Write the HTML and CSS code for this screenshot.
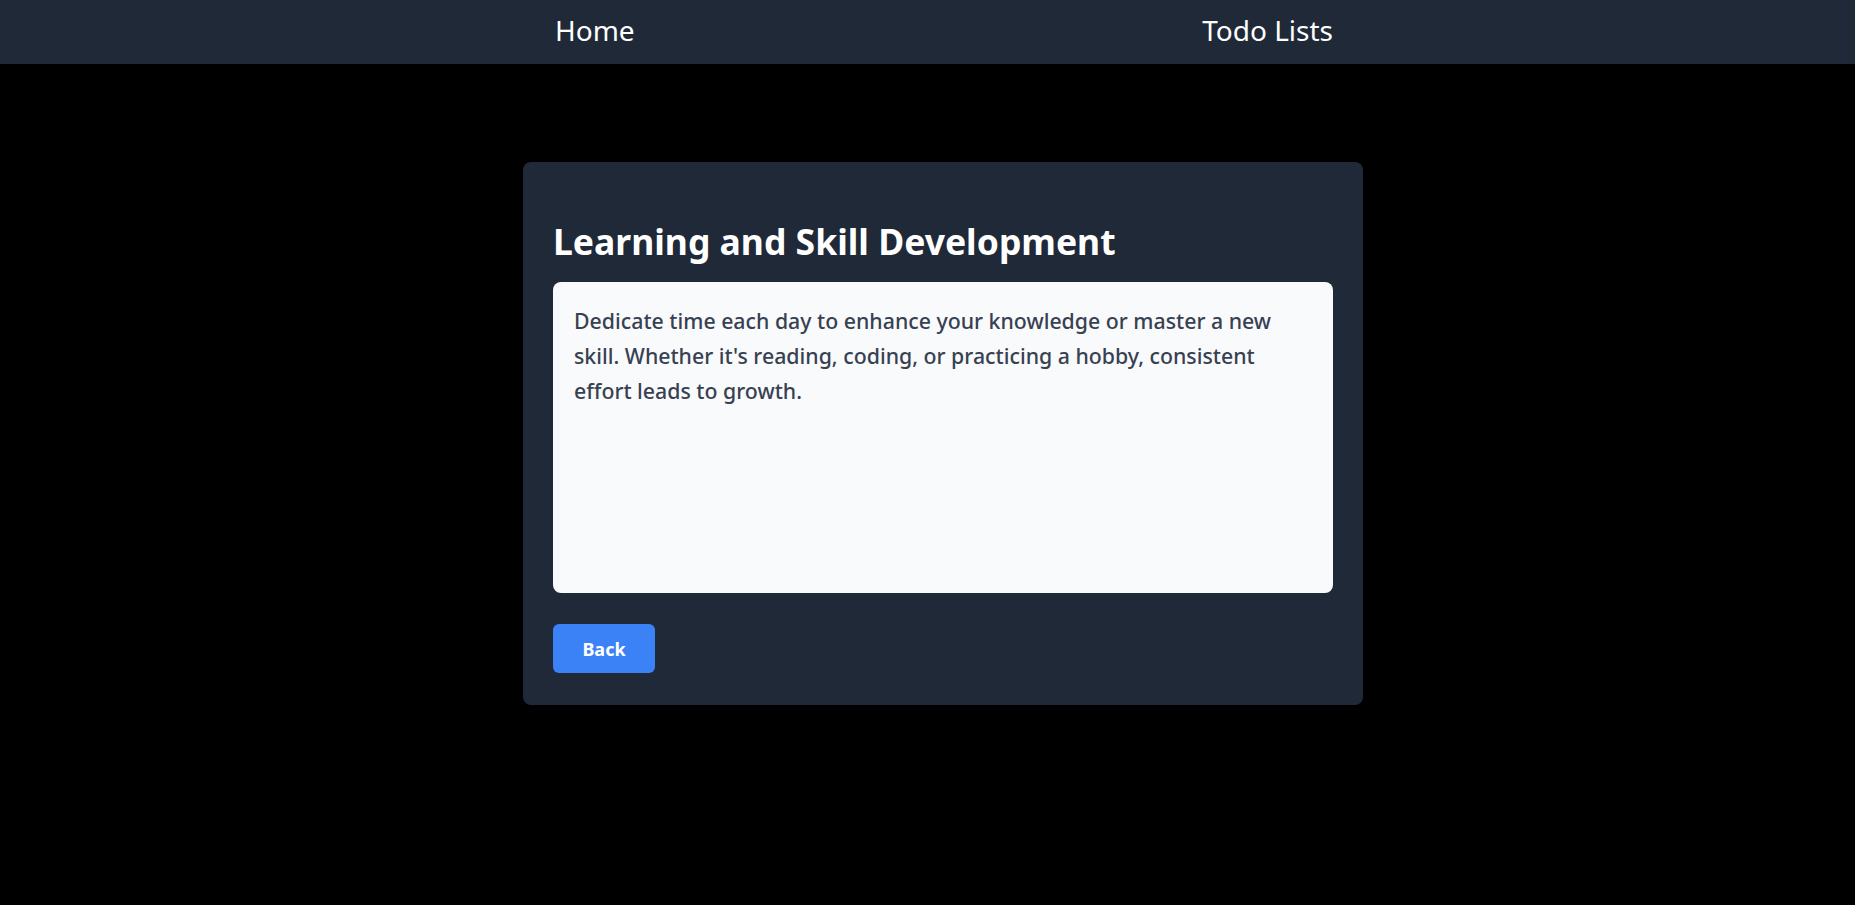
FILE: index.html
```html
<!DOCTYPE html>
<html lang="en">
<head>
<meta charset="utf-8">
<title>Learning and Skill Development</title>
<link rel="stylesheet" href="styles.css">
</head>
<body>
  <nav class="navbar">
    <div class="nav-inner">
      <a class="nav-link" href="#">Home</a>
      <a class="nav-link" href="#">Todo Lists</a>
    </div>
  </nav>
  <main class="page">
    <section class="card">
      <h1 class="card-title">Learning and Skill Development</h1>
      <div class="card-body">
        <p class="card-text">Dedicate time each day to enhance your knowledge or master a new skill. Whether it's reading, coding, or practicing a hobby, consistent effort leads to growth.</p>
      </div>
      <button class="btn-back" type="button">Back</button>
    </section>
  </main>
</body>
</html>
```

FILE: styles.css
```css
* { box-sizing: border-box; }

html, body {
  margin: 0;
  padding: 0;
  background: #000000;
  font-family: "Noto Sans", "Open Sans", sans-serif;
}

.navbar {
  background: #1f2937;
  height: 64px;
  padding-left: 31px;
}

.nav-inner {
  width: 840px;
  margin: 0 auto;
  padding: 0 30px 0 32px;
  height: 100%;
  display: flex;
  justify-content: space-between;
  align-items: center;
}

.nav-link {
  color: #ffffff;
  text-decoration: none;
  font-size: 28px;
  line-height: 36px;
  margin-top: -4px;
}

.page {
  display: flex;
  justify-content: center;
  padding-top: 98px;
  padding-left: 31px;
}

.card {
  width: 840px;
  background: #1f2937;
  border-radius: 8px;
  padding: 59px 30px 32px;
}

.card-title {
  margin: 0 0 21px;
  color: #ffffff;
  font-size: 35.5px;
  line-height: 40px;
  font-weight: 700;
}

.card-body {
  background: #f9fafb;
  border-radius: 8px;
  height: 311px;
  padding: 21px 21px;
}

.card-text {
  margin: 0;
  color: #374151;
  font-size: 21.3px;
  line-height: 35px;
  font-weight: 500;
}

.btn-back {
  margin-top: 31px;
  display: block;
  width: 102px;
  height: 49px;
  background: #3b82f6;
  color: #ffffff;
  border: none;
  border-radius: 6px;
  font-family: inherit;
  font-size: 18px;
  font-weight: 700;
  cursor: pointer;
}
```
